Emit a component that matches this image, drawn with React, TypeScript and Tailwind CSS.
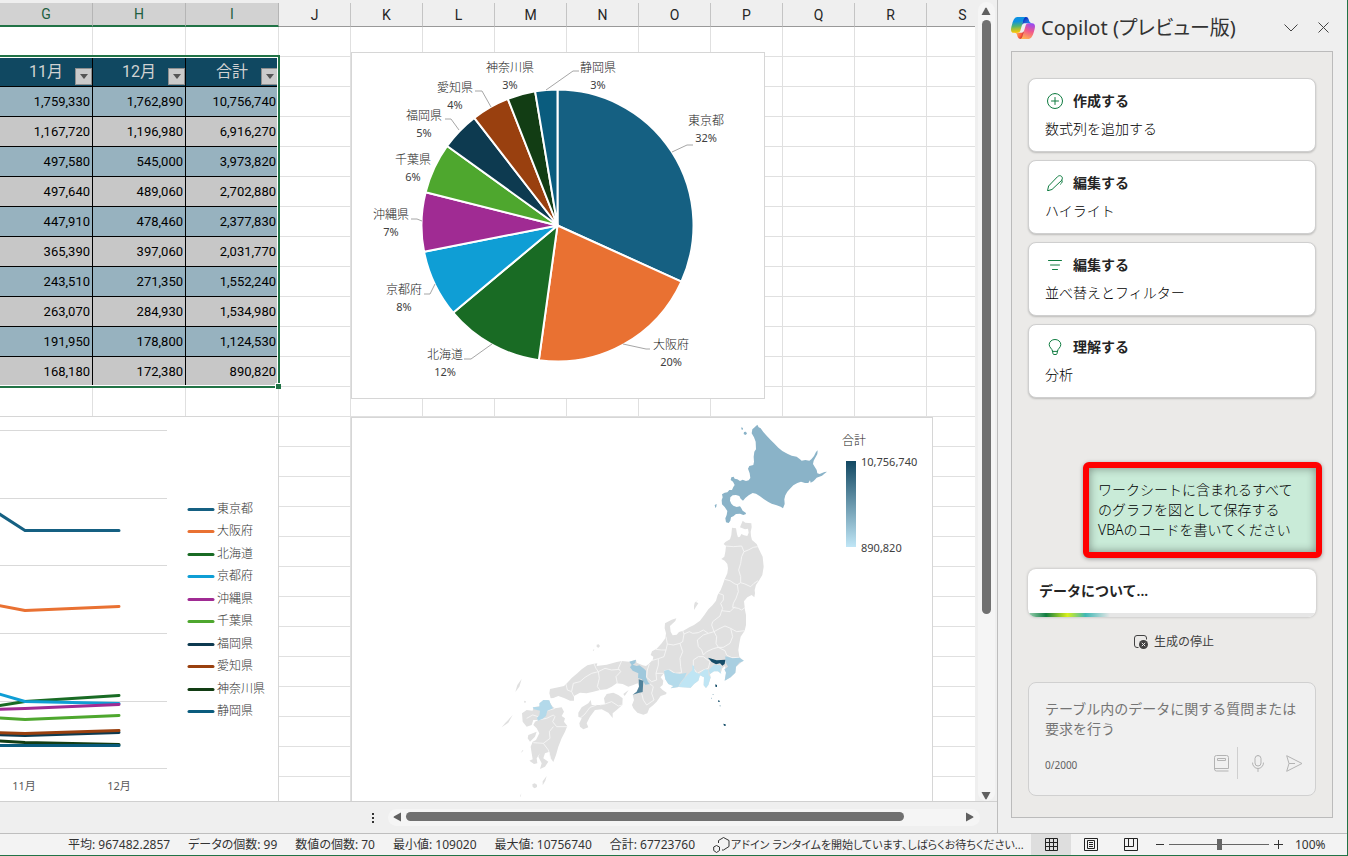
import type { ReactNode } from "react";

type Prefecture = {
  name: string;
  color: string;
  total: number;
  // 折れ線グラフの座標（10月 / 11月 / 12月）
  line: string;
  legendY: number;
  label: { x: number; y: number; percent: string };
  leader?: string;
};

const PREFECTURES: Prefecture[] = [
  {
    name: "東京都", color: "#156082", total: 10756740,
    line: "-6,93 25,113 119,113", legendY: 92,
    label: { x: 354, y: 68, percent: "32%" }, leader: "341,92 335,92 320,99",
  },
  {
    name: "大阪府", color: "#e97132", total: 6916270,
    line: "-6,187 25,193 119,189", legendY: 114,
    label: { x: 319, y: 292, percent: "20%" }, leader: "298,296 294,296 271,291",
  },
  {
    name: "北海道", color: "#196b24", total: 3973820,
    line: "-6,289 25,284 119,278", legendY: 137,
    label: { x: 93, y: 302, percent: "12%" }, leader: "112,306 119,306 140,291",
  },
  {
    name: "京都府", color: "#0f9ed5", total: 2702880,
    line: "-6,275 25,284 119,286", legendY: 159,
    label: { x: 52, y: 237, percent: "8%" }, leader: "72,241 78,241 83,231",
  },
  {
    name: "沖縄県", color: "#a02b93", total: 2377830,
    line: "-6,292 25,291 119,287", legendY: 182,
    label: { x: 39, y: 162, percent: "7%" }, leader: "59,166 65,166 70,168",
  },
  {
    name: "千葉県", color: "#4ea72e", total: 2031770,
    line: "-6,300 25,302 119,298", legendY: 204,
    label: { x: 61, y: 107, percent: "6%" },
  },
  {
    name: "福岡県", color: "#0d3a50", total: 1552240,
    line: "-6,317 25,318 119,315", legendY: 227,
    label: { x: 72, y: 63, percent: "5%" }, leader: "93,66 99,66 107,77",
  },
  {
    name: "愛知県", color: "#99400f", total: 1534980,
    line: "-6,315 25,316 119,313", legendY: 249,
    label: { x: 103, y: 35, percent: "4%" }, leader: "123,38 130,38 139,54",
  },
  {
    name: "神奈川県", color: "#123d14", total: 1124530,
    line: "-6,323 25,325 119,327", legendY: 272,
    label: { x: 158, y: 15, percent: "3%" },
  },
  {
    name: "静岡県", color: "#0a5c7e", total: 890820,
    line: "-6,328 25,328 119,328", legendY: 294,
    label: { x: 246, y: 15, percent: "3%" }, leader: "227,18 221,18 194,37",
  },
];

const ROWS = [
  ["1,759,330", "1,762,890", "10,756,740"],
  ["1,167,720", "1,196,980", "6,916,270"],
  ["497,580", "545,000", "3,973,820"],
  ["497,640", "489,060", "2,702,880"],
  ["447,910", "478,460", "2,377,830"],
  ["365,390", "397,060", "2,031,770"],
  ["243,510", "271,350", "1,552,240"],
  ["263,070", "284,930", "1,534,980"],
  ["191,950", "178,800", "1,124,530"],
  ["168,180", "172,380", "890,820"],
];

const SELECTED_COLUMNS = ["G", "H", "I"];
const OTHER_COLUMNS = ["J", "K", "L", "M", "N", "O", "P", "Q", "R", "S"];
const EMPTY_CELL = "h-[30px] border-r border-b border-[#e0e0e0] p-0";

function EmptyCells({ count }: { count: number }) {
  return (
    <>
      {Array.from({ length: count }, (_, i) => (
        <td key={i} className={EMPTY_CELL} />
      ))}
    </>
  );
}

function Grid() {
  return (
    <table className="w-[999px] table-fixed border-separate border-spacing-0 bg-white">
      <colgroup>
        {SELECTED_COLUMNS.map((c) => (
          <col key={c} className="w-[93px]" />
        ))}
        {OTHER_COLUMNS.map((c) => (
          <col key={c} className="w-[72px]" />
        ))}
      </colgroup>
      <thead>
        <tr>
          {SELECTED_COLUMNS.map((c) => (
            <th
              key={c}
              className="h-6 border-r border-b-2 border-r-[#b5b5b5] border-b-[#217346] bg-[#d2d2d2] p-0 text-sm leading-5 font-normal text-[#1e6040]"
            >
              {c}
            </th>
          ))}
          {OTHER_COLUMNS.map((c) => (
            <th
              key={c}
              className="h-6 border-r border-b border-r-[#c4c4c4] border-b-[#999] bg-[#efefef] p-0 text-sm leading-5 font-normal text-[#262626]"
            >
              {c}
            </th>
          ))}
        </tr>
      </thead>
      <tbody>
        <tr>
          <EmptyCells count={13} />
        </tr>
        <tr>
          {["11月", "12月", "合計"].map((label) => (
            <th
              key={label}
              className="relative h-[30px] border-r border-b border-black bg-[#104861] p-0 text-base leading-6 font-normal text-[#d2d2d2]"
            >
              {label}
              <button
                type="button"
                aria-label={`${label}のフィルター`}
                className="absolute right-0 bottom-px flex size-[17px] items-center justify-center border border-[#8f8f8f] bg-[#cbcbcb]"
              >
                <svg width="8" height="5" viewBox="0 0 8 5">
                  <path d="M0 0h8L4 5z" fill="#555" />
                </svg>
              </button>
            </th>
          ))}
          <EmptyCells count={10} />
        </tr>
        {ROWS.map((row, i) => (
          <tr key={row[0]}>
            {row.map((value) => (
              <td
                key={value}
                className={
                  i % 2 === 0
                    ? "h-[30px] border-r border-b border-black bg-[#97b2bf] p-0 pr-0.5 text-right text-[13px] leading-5 text-black"
                    : "h-[30px] border-r border-b border-black bg-[#c7c7c7] p-0 pr-0.5 text-right text-[13px] leading-5 text-black"
                }
              >
                {value}
              </td>
            ))}
            <EmptyCells count={10} />
          </tr>
        ))}
        {Array.from({ length: 14 }, (_, i) => (
          <tr key={i}>
            <EmptyCells count={13} />
          </tr>
        ))}
      </tbody>
    </table>
  );
}

function LineChart() {
  return (
    <svg width="278" height="384" viewBox="0 0 278 384" role="img" aria-label="月別の折れ線グラフ">
      {[13, 81, 148, 216, 284, 351].map((y) => (
        <path key={y} d={`M0 ${y + 0.5}H167`} stroke="#d9d9d9" />
      ))}
      {PREFECTURES.map((p) => (
        <g key={p.name}>
          <polyline
            points={p.line}
            transform="translate(0 .5)"
            fill="none"
            stroke={p.color}
            strokeWidth="3"
            strokeLinecap="round"
            strokeLinejoin="round"
          />
          <path d={`M189 ${p.legendY + 0.5}H213`} stroke={p.color} strokeWidth="3" strokeLinecap="round" />
          <text x="217" y={p.legendY + 4} className="fill-[#333] text-xs font-light">
            {p.name}
          </text>
        </g>
      ))}
      <text x="24" y="373" textAnchor="middle" className="fill-[#595959] text-[11px]">
        11月
      </text>
      <text x="119" y="373" textAnchor="middle" className="fill-[#595959] text-[11px]">
        12月
      </text>
    </svg>
  );
}

const PIE = { cx: 205.5, cy: 172.5, r: 136 };

function slicePath(from: number, to: number) {
  const point = (t: number) => {
    const a = t * Math.PI * 2;
    return `${PIE.cx + PIE.r * Math.sin(a)} ${PIE.cy - PIE.r * Math.cos(a)}`;
  };
  return `M${PIE.cx} ${PIE.cy}L${point(from)}A${PIE.r} ${PIE.r} 0 0 1 ${point(to)}Z`;
}

function PieChart() {
  const sum = PREFECTURES.reduce((acc, p) => acc + p.total, 0);
  let start = 0;
  const slices = PREFECTURES.map((p) => {
    const from = start;
    start += p.total / sum;
    return { p, d: slicePath(from, start) };
  });

  return (
    <svg width="412" height="345" viewBox="0 0 412 345" role="img" aria-label="都道府県別の円グラフ">
      {slices.map(({ p, d }) => (
        <path key={p.name} d={d} fill={p.color} stroke="#fff" strokeWidth="2" strokeLinejoin="round" />
      ))}
      {PREFECTURES.map((p) => (
        <g key={p.name}>
          {p.leader ? <polyline points={p.leader} fill="none" stroke="#a6a6a6" /> : null}
          <text x={p.label.x} y={p.label.y + 4} textAnchor="middle" className="fill-[#222] text-xs font-light">
            {p.name}
          </text>
          <text x={p.label.x} y={p.label.y + 21} textAnchor="middle" className="fill-[#404040] text-[11px]">
            {p.label.percent}
          </text>
        </g>
      ))}
    </svg>
  );
}

const HOKKAIDO =
  "M172 44L176 52 182 55 190 66 200 77 212 90 222 100 235 113 247 123 262 131 275 137 290 140 300 148 305 152 316 150 328 152 334 148 342 138 348 126 353 121 352 132 345 145 341 152 339 162 344 170 350 180 352 190 359 192 368 188 374 186 381 185 375 190 366 197 356 201 350 203 346 208 340 214 332 218 330 211 325 219 315 219 303 215 292 219 280 226 270 236 262 245 256 256 253 268 254 282 249 295 242 290 230 286 215 281 205 276 192 268 180 259 168 251 158 249 146 256 136 264 129 272 122 266 118 258 108 255 98 256 91 262 90 272 94 281 100 287 110 291 120 289 124 295 128 302 137 308 138 312 130 315 120 311 108 312 100 319 93 322 91 332 86 339 78 337 76 325 80 315 82 303 74 291 66 283 65 270 68 262 66 253 74 248 82 247 88 240 96 240 100 231 104 225 99 215 92 210 94 202 101 200 104 206 112 208 120 213 128 209 138 213 146 211 151 204 149 190 144 176 148 168 160 165 162 155 161 140 163 125 168 118 167 95 162 82 155 70 157 58 164 52ZM124 52l5 2-1 6-4-2ZM132 66l6-1 3 6-5 4-5-3ZM44 285l6-3-1 8-3 4Z";

const LAND = [
  // 本州
  "M758-208L766-202 784-200 785-188 782-175 783-162 786-150 800-138 808-120 818-100 821-70 817-45 808-30 798-15 794 0 795 10 793 22 785 15 772 22 762 34 765 60 768 75 768 105 764 122 752 140 748 160 745 180 748 200 760 212 738 230 736 248 722 262 704 272 708 248 705 228 697 235 692 250 684 244 672 244 660 252 662 262 655 285 648 294 641 286 642 262 630 256 625 272 612 282 602 293 566 291 542 295 550 288 535 282 526 268 522 250 512 262 520 272 518 285 510 292 518 300 530 308 528 313 512 318 500 335 490 345 478 355 472 370 460 374 442 368 430 355 426 345 432 330 428 314 440 305 447 288 443 280 430 285 415 290 398 282 380 280 365 290 350 298 330 300 310 305 290 310 270 308 252 318 252 332 240 332 222 324 205 318 190 324 182 325 178 310 180 297 205 292 222 288 232 278 245 264 262 250 275 238 292 226 312 221 322 220 320 228 350 224 380 216 395 213 418 215 428 212 438 209 440 218 458 226 468 228 476 222 484 214 488 210 490 200 482 195 486 184 500 176 515 160 526 145 528 130 524 115 525 100 532 96 545 89 559 85 556 93 540 108 542 125 548 136 560 134 567 126 580 122 598 112 612 105 630 92 643 75 655 58 668 45 678 32 683 15 692 0 698-15 704-32 712-50 714-65 712-78 704-88 694-93 703-100 706-115 708-132 701-138 706-144 720-152 724-165 726-187 738-185 741-168 744-158 750-160 754-168 762-164 772-162 776-172 774-184 765-182 750-188Z",
  // 四国
  "M265 368L275 352 295 340 302 330 305 345 330 345 345 342 342 325 350 312 370 308 385 315 398 325 397 345 380 360 368 370 368 384 355 368 335 358 315 360 300 380 290 400 295 412 280 418 270 410 268 400 275 385 265 380Z",
  // 九州
  "M130 352L150 348 160 330 175 330 188 350 195 355 215 352 222 365 215 378 225 385 222 395 232 408 225 425 215 445 205 470 198 495 190 516 182 505 178 485 165 490 160 505 175 515 165 530 150 537 155 520 145 500 150 490 140 505 142 520 132 522 118 512 128 508 125 490 122 470 128 455 138 450 148 430 140 415 130 405 135 395 145 390 130 390 125 405 110 410 98 395 96 370 110 360 128 362Z",
  // 島
  "M115 435L140 425 135 440 120 455 113 445ZM626 28L618 36 625 40 612 60 612 48 614 38ZM95 267L88 290 76 306 82 285ZM68 375L55 398 35 412 45 400ZM416 300L404 318 400 312ZM103 332l5 2-2 5-4-2ZM127 583l7-3 7 4 0 7-7 4-6-4ZM170 558L166 572 158 586 158 574ZM320 164l6-1 4 5-4 5-6-2ZM308 180l5-2-2 5ZM100 482l-8 7 6-9ZM94 610l-2 10-2-1Z",
].join("");

const BORDERS =
  "M706-132L730-130 755-132 762-115 775-120 790-128 803-130M762-115L755-100 752-80 746-60 752-40 752-22M704-32L720-28 735-18 742-16 752-22 765-18 782-10 792-20 804-28M742-16L745 5 738 25 730 40 728 52M686 10L700 15 700 30 692 40 698 55 695 62M728 52L745 55 755 60 766 52M695 62L720 65 735 50M695 62L690 78 668 95 665 105 672 125 690 115 705 108 722 115 740 125 764 122M672 125L680 140 678 160 685 172M722 115L728 140 720 160 700 172 685 172M640 195L650 185 670 176 685 172 705 182 710 195 725 203 748 202M672 125L655 130 640 135 622 150 625 170 635 180 640 195M655 130L640 120 625 128 608 130 598 125 582 132 578 122M582 132L578 155 570 160 550 165 532 162 528 140M532 162L528 180 515 180 497 178M528 180L522 200 505 206 484 212M570 160L578 185 570 205 572 230 575 248M522 242L540 240 555 250 575 248M610 210L625 200 640 200 660 215 655 235 640 240 622 250 610 235ZM505 206L505 225 498 250 500 270 485 275 470 262 472 240 478 222M498 250L520 250M478 280L490 290 485 310 492 330 470 345M455 310L460 330 470 345M395 213L385 235 392 245 378 260 382 280M325 245L345 235 365 240 388 238M325 245L328 265 322 290 330 300M325 245L305 250 285 262 270 275 250 280M228 282L232 300 245 305 252 320M250 280L245 304M312 221L318 235 325 245M330 345L345 342 365 335 385 348 397 345M270 385L285 372 300 352 320 345M142 390L170 385 190 375 195 380 188 395 200 410 232 410M190 410L178 425 180 445 160 460 130 458M160 460L175 480 182 505M172 362L195 355M110 385L128 375 145 380";

const REGIONS: [string, string][] = [
  ["#b3d9ea", "M128 352L148 350 148 340 160 330 178 331 182 343 189 355 172 362 168 378 158 386 144 392 141 384 148 376 150 362 132 358Z"],
  ["#9fc8dc", "M418 215L428 212 438 209 436 219 428 224 440 228 448 226 462 236 468 242 468 262 474 276 480 282 466 284 456 268 444 264 445 250 428 242 420 232 425 225Z"],
  ["#50829b", "M446 268L460 272 458 306 445 309 428 314 440 305 447 290Z"],
  ["#b5dbeb", "M522 242L535 239 548 248 570 252 590 248 584 262 570 280 565 291 542 295 550 288 535 282 526 268Z"],
  ["#bfe5f4", "M566 291L572 280 586 262 595 252 607 240 607 225 612 228 614 245 628 252 645 238 655 240 656 256 662 262 655 285 648 294 641 286 642 262 630 256 625 272 612 282 602 293Z"],
  ["#bce2f1", "M656 240L668 228 672 224 690 226 695 232 690 240 694 252 684 244 672 244 660 252Z"],
  ["#a9cfe1", "M706 199L728 205 748 203 762 212 748 218 738 230 736 248 722 262 704 272 708 248 703 238 714 230 706 215Z"],
  ["#154d69", "M654 203L665 206 680 211 706 209 704 222 697 227 690 220 678 223 665 216ZM676 283l5 2 0 6-5-1ZM684 331l5 1 0 4-4 0ZM700 401l7 2 0 5-5-1Z"],
  ["#8fb0bf", "M689 345l3 1-1 4-2-1ZM668 312l3 0-1 3-2 0ZM664 323l2 0 0 4-2-1Z"],
];

function MapChart() {
  return (
    <svg width="580" height="383" viewBox="0 0 580 383" role="img" aria-label="都道府県別の塗り分けマップ">
      <defs>
        <linearGradient id="mapScale" x1="0" y1="0" x2="0" y2="1">
          <stop offset="0" stopColor="#124862" />
          <stop offset="1" stopColor="#c0e6f6" />
        </linearGradient>
      </defs>
      <g transform="translate(348 -8) scale(.33333)">
        <path d={HOKKAIDO} fill="#8ab3c8" />
      </g>
      <g transform="translate(138 172) scale(.33333)">
        <path d={LAND} fill="#e0e0e0" />
        <path d={BORDERS} fill="none" stroke="#f8f8f8" strokeWidth="2.500" strokeLinejoin="round" />
        {REGIONS.map(([fill, d]) => (
          <path key={d} d={d} fill={fill} />
        ))}
      </g>
      <text x="490" y="27" className="fill-[#222] text-xs font-light">
        合計
      </text>
      <rect x="494" y="43" width="10" height="86" fill="url(#mapScale)" />
      <text x="509" y="48" className="fill-[#404040] text-[11px]">
        10,756,740
      </text>
      <text x="509" y="134" className="fill-[#404040] text-[11px]">
        890,820
      </text>
    </svg>
  );
}

function Worksheet() {
  return (
    <div className="relative min-h-0 flex-1 overflow-hidden bg-[#efefef] pt-[3px] font-[Roboto,'Noto_Sans_CJK_JP',sans-serif]">
      <Grid />
      {/* 選択範囲の枠とフィルハンドル */}
      <div className="pointer-events-none absolute top-[55px] -left-1 h-[333px] w-[284px] border-2 border-[#217346] ring-1 ring-white ring-inset">
        <span className="absolute -right-[3px] -bottom-[3px] size-1.5 border-t border-l border-white bg-[#217346]" />
      </div>
      <div className="absolute top-[416px] bottom-0 left-0 overflow-hidden border-t border-r border-[#d6d6d6] bg-white font-['Noto_Sans','Noto_Sans_CJK_JP',sans-serif]">
        <LineChart />
      </div>
      <div className="absolute top-[52px] left-[351px] border border-[#d6d6d6] bg-white font-['Noto_Sans','Noto_Sans_CJK_JP',sans-serif]">
        <PieChart />
      </div>
      <div className="absolute top-[417px] bottom-0 left-[351px] overflow-hidden border border-b-0 border-[#d6d6d6] bg-white font-['Noto_Sans','Noto_Sans_CJK_JP',sans-serif]">
        <MapChart />
      </div>
    </div>
  );
}

function VerticalScroll() {
  return (
    <div className="flex w-[22px] flex-col items-center pt-0.5">
      <div className="flex w-[17px] flex-1 flex-col items-center rounded-full bg-[#f5f5f5]">
        <button type="button" aria-label="上へスクロール" className="flex h-[18px] items-center">
          <svg width="10" height="8" viewBox="0 0 10 8">
            <path d="M.5 8L4.200 1.200q.8-1.400 1.600 0L9.500 8z" fill="#606060" />
          </svg>
        </button>
        <div className="h-[594px] w-[9px] rounded-full bg-[#707070]" />
        <button type="button" aria-label="下へスクロール" className="mt-auto flex h-[11px] items-center">
          <svg width="10" height="8" viewBox="0 0 10 8">
            <path d="M.5 0h9L5.800 6.800q-.8 1.400-1.600 0z" fill="#606060" />
          </svg>
        </button>
      </div>
    </div>
  );
}

function HorizontalScroll() {
  return (
    <div className="flex h-8 items-center border-t border-[#d0d0d0] pr-[17px]">
      <div className="ml-auto flex w-4 items-center">
        <svg width="3" height="12" viewBox="0 0 3 12" fill="#333">
          <path d="M0 1h2v2H0zM0 5h2v2H0zM0 9h2v2H0z" />
        </svg>
      </div>
      <div className="flex h-[17px] w-[592px] items-center rounded-full bg-[#f5f5f5] pb-0.5">
        <button type="button" aria-label="左へスクロール" className="flex w-[18px] justify-center">
          <svg width="8" height="10" viewBox="0 0 8 10">
            <path d="M8 .5v9L1.200 5.800q-1.400-.8 0-1.600z" fill="#606060" />
          </svg>
        </button>
        <div className="h-[9px] w-[498px] rounded-full bg-[#707070]" />
        <button type="button" aria-label="右へスクロール" className="mr-1.5 ml-auto flex">
          <svg width="8" height="10" viewBox="0 0 8 10">
            <path d="M0 .5v9l6.800-3.700q1.400-.8 0-1.600z" fill="#606060" />
          </svg>
        </button>
      </div>
    </div>
  );
}

function CopilotLogo() {
  return (
    <svg width="24" height="24" viewBox="2 2 44 44" aria-hidden="true">
      <defs>
        <radialGradient id="cpTop" cx="0" cy="0" r="1" gradientUnits="userSpaceOnUse" gradientTransform="matrix(-11 -13.4 12.6 -10.3 38 20.5)">
          <stop offset=".1" stopColor="#00aeff" />
          <stop offset=".77" stopColor="#2253ce" />
          <stop offset="1" stopColor="#0736c4" />
        </radialGradient>
        <radialGradient id="cpBottom" cx="0" cy="0" r="1" gradientUnits="userSpaceOnUse" gradientTransform="matrix(9.9 12.6 -12.2 9.5 11.1 32.8)">
          <stop stopColor="#ffb657" />
          <stop offset=".63" stopColor="#ff5f3d" />
          <stop offset=".92" stopColor="#c02b3c" />
        </radialGradient>
        <linearGradient id="cpLeft" x1="12.5" y1="7.5" x2="14.6" y2="33.9" gradientUnits="userSpaceOnUse">
          <stop offset=".16" stopColor="#0d91e1" />
          <stop offset=".49" stopColor="#52b471" />
          <stop offset=".65" stopColor="#98bd42" />
          <stop offset=".94" stopColor="#ffc800" />
        </linearGradient>
        <radialGradient id="cpRight" cx="0" cy="0" r="1" gradientUnits="userSpaceOnUse" gradientTransform="matrix(-12.7 36.2 -43.4 -15.2 41.3 12.2)">
          <stop offset=".07" stopColor="#8c48ff" />
          <stop offset=".5" stopColor="#f2598a" />
          <stop offset=".9" stopColor="#ffb152" />
        </radialGradient>
      </defs>
      <path fill="url(#cpTop)" d="M34.142 7.325A4.63 4.63 0 0 0 29.7 4h-1.35a4.63 4.63 0 0 0-4.554 3.794L21.48 20.407l.575-1.965a4.63 4.63 0 0 1 4.444-3.33h7.853l3.294 1.282 3.175-1.283h-.926a4.63 4.63 0 0 1-4.443-3.325z" />
      <path fill="url(#cpBottom)" d="M14.33 40.656A4.63 4.63 0 0 0 18.779 44h2.87a4.63 4.63 0 0 0 4.629-4.51l.312-12.163-.654 2.233a4.63 4.63 0 0 1-4.443 3.329h-7.919l-2.823-1.532-3.057 1.532h.912a4.63 4.63 0 0 1 4.447 3.344z" />
      <path fill="url(#cpLeft)" d="M29.5 4H13.46c-4.583 0-7.333 6.057-9.166 12.113-2.172 7.176-5.014 16.775 3.208 16.775h6.925a4.63 4.63 0 0 0 4.456-3.358 2078 2078 0 0 1 4.971-17.156c.843-2.843 1.544-5.284 2.621-6.805C27.079 4.716 28.086 4 29.501 4Z" />
      <path fill="url(#cpRight)" d="M18.498 44h16.04c4.582 0 7.332-6.058 9.165-12.115 2.172-7.177 5.013-16.778-3.208-16.778h-6.927a4.63 4.63 0 0 0-4.454 3.352 2082 2082 0 0 1-4.972 17.164c-.842 2.843-1.544 5.285-2.62 6.806-.604.852-1.61 1.57-3.024 1.57Z" />
    </svg>
  );
}

function StrokeIcon({ children, size = 16 }: { children: ReactNode; size?: number }) {
  return (
    <svg width={size} height={size} viewBox="0 0 16 16" fill="none" stroke="currentColor" strokeLinecap="round" strokeLinejoin="round" aria-hidden="true">
      {children}
    </svg>
  );
}

const ACTIONS = [
  {
    title: "作成する",
    text: "数式列を追加する",
    icon: <path d="M8 .5a7.5 7.5 0 1 0 0 15a7.5 7.5 0 1 0 0-15M8 4.5v7M4.500 8h7" />,
  },
  {
    title: "編集する",
    text: "ハイライト",
    icon: <path d="M.6 15.400l1-4.400L10.500 1.700c2.800-2.800 6.600.600 4 3.800L5.300 14.200zM14.800 5c1 1.600.3 2.800-1.300 4.200" />,
  },
  {
    title: "編集する",
    text: "並べ替えとフィルター",
    icon: <path d="M1.500 3.500h13M3.500 8h9M5.500 12.500h5" />,
  },
  {
    title: "理解する",
    text: "分析",
    icon: <path d="M5.500 12c-.3-2.500-3.300-3.300-3.300-6.500a5.800 5 0 0 1 11.600 0c0 3.200-3 4-3.300 6.500zM5.500 12l.5 2.700q.2.800 1 .8h2q.8 0 1-.8l.5-2.700" />,
  },
];

function CopilotPane() {
  return (
    <aside className="flex w-[350px] shrink-0 flex-col border-l border-[#bdbdbd] bg-[#efefef] pr-[14px] pb-[15px] pl-[13px] text-[#242424]">
      <header className="flex h-[51px] items-center pt-1">
        <CopilotLogo />
        <h2 className="ml-1.5 flex-1 text-xl leading-7 whitespace-nowrap text-[#333] [font-feature-settings:'palt']">
          Copilot (プレビュー版)
        </h2>
        <button type="button" aria-label="作業ウィンドウのオプション" className="mr-5 flex">
          <svg width="14" height="8" viewBox="0 0 14 8" fill="none" stroke="#444">
            <path d="M.5.500L7 7 13.500.500" />
          </svg>
        </button>
        <button type="button" aria-label="閉じる" className="mr-1 flex">
          <svg width="11" height="11" viewBox="0 0 11 11" fill="none" stroke="#444">
            <path d="M.5.500l10 10M10.500.500l-10 10" />
          </svg>
        </button>
      </header>

      <div className="flex flex-1 flex-col border border-[#bbb] bg-[#ebeae8] px-4 pt-[26px] pb-[21px]">
        <div className="flex flex-col gap-2">
          {ACTIONS.map((a) => (
            <button
              key={a.text}
              type="button"
              className="flex h-[74px] flex-col items-start justify-center gap-2 rounded-lg border border-[#cfcfcf] bg-white px-4 text-left text-sm leading-5 shadow-[0_1px_2px_rgba(0,0,0,0.2)]"
            >
              <span className="flex items-center gap-2.5 pl-0.5 font-semibold">
                <span className="text-[#107c41]">
                  <StrokeIcon>{a.icon}</StrokeIcon>
                </span>
                {a.title}
              </span>
              <span className="font-light text-black">{a.text}</span>
            </button>
          ))}
        </div>

        <div className="mt-16 -mr-1.5 ml-auto w-[239px] rounded-md border-[6px] border-[#ff0000] bg-[#c9ebd8] py-3 pr-2 pl-[9px] text-sm leading-5 font-light text-black shadow-[0_1px_4px_rgba(0,0,0,0.35),inset_0_0_10px_rgba(0,0,0,0.4)]">
          ワークシートに含まれるすべて
          <br />
          のグラフを図として保存する
          <br />
          VBAのコードを書いてください
        </div>

        <div className="mt-[11px] overflow-hidden rounded-lg bg-white shadow-[0_0_3px_rgba(0,0,0,0.25)]">
          <p className="px-[11px] py-3 text-sm leading-5 font-semibold">データについて...</p>
          <div className="h-1 bg-[#e6e6e6]">
            <div className="h-full w-[82px] bg-[linear-gradient(90deg,#9fd3b5,#107c41_22%,#d8f01c_48%,#3fb8b5_70%,#e6e6e6)]" />
          </div>
        </div>

        <button type="button" className="mx-auto mt-[15px] flex items-center gap-1.5 pl-1 text-xs leading-5 text-[#424242]">
          <svg width="14" height="14" viewBox="0 0 14 14" fill="none" aria-hidden="true">
            <path d="M4.500 12.500H3A2.500 2.500 0 0 1 .5 10V3A2.500 2.500 0 0 1 3 .5h7A2.500 2.500 0 0 1 12.500 3v1.500" stroke="#424242" />
            <circle cx="9.500" cy="9.500" r="4.500" fill="#424242" />
            <path d="M7.800 7.800l3.400 3.400M11.200 7.800l-3.400 3.400" stroke="#ebeae8" />
          </svg>
          生成の停止
        </button>

        <div className="mt-auto rounded-lg border border-[#d0d0d0] bg-[#f0f0f0] py-4 pr-3 pl-4 text-[#b3b3b3]">
          <textarea
            aria-label="Copilot への質問"
            rows={2}
            placeholder="テーブル内のデータに関する質問または要求を行う"
            className="block w-full resize-none bg-transparent text-sm leading-5 placeholder:text-[#757575] focus:outline-none"
          />
          <div className="mt-2 flex h-8 items-center">
            <span className="mr-auto pt-1 text-[10px] text-[#616161]">0/2000</span>
            <button type="button" aria-label="プロンプト ガイド" className="flex pr-2">
              <svg width="15" height="17" viewBox="0 0 15 17" fill="none" stroke="currentColor">
                <path d="M.5 14V2.500a2 2 0 0 1 2-2h10a2 2 0 0 1 2 2V13.500M.5 14a2 2 0 0 0 2 2h12M.5 13.500h14M3.500 3.500h8v2h-8z" />
              </svg>
            </button>
            <span className="h-8 w-px bg-[#cfcfcf]" />
            <button type="button" aria-label="音声入力" className="flex px-[13px]">
              <svg width="14" height="17" viewBox="0 0 14 17" fill="none" stroke="currentColor" strokeLinecap="round">
                <path d="M7 .5a3 3 0 0 0-3 3V8a3 3 0 0 0 6 0V3.500a3 3 0 0 0-3-3zM1.500 8a5.500 5.500 0 0 0 11 0M7 13.500v3" />
              </svg>
            </button>
            <button type="button" aria-label="送信" className="ml-2 flex">
              <svg width="17" height="17" viewBox="0 0 17 17" fill="none" stroke="currentColor" strokeLinejoin="round">
                <path d="M.7.700L16 8.500.7 16.300l2.300-7.800zM3 8.500h6" />
              </svg>
            </button>
          </div>
        </div>
      </div>
    </aside>
  );
}

const STATS = [
  "平均: 967482.2857",
  "データの個数: 99",
  "数値の個数: 70",
  "最小値: 109020",
  "最大値: 10756740",
  "合計: 67723760",
];

function StatusBar() {
  return (
    <footer className="flex h-[22px] shrink-0 items-center border-t border-[#bebebe] bg-[#f3f3f3] text-xs leading-4 whitespace-nowrap text-[#333]">
      <div className="ml-auto flex gap-[18px] [font-feature-settings:'palt']">
        {STATS.map((s) => (
          <span key={s}>{s}</span>
        ))}
      </div>
      <div className="ml-[18px] flex w-[318px] items-center text-[11px] [font-feature-settings:'palt']">
        <svg width="18" height="18" viewBox="0 0 18 18" fill="none" stroke="#333" aria-hidden="true">
          <path d="M5.500 7V4.500L10.500 1.500 16 4.500V10.500L10.500 14H9M3.500 9.500L6.500 11v3.500L3.500 16.500.7 14.500V11z" />
        </svg>
        アドイン ランタイムを開始しています、しばらくお待ちください...
      </div>
      <button type="button" aria-label="標準" className="flex h-full w-10 items-center justify-center bg-[#dedede]">
        <svg width="13" height="13" viewBox="0 0 13 13" fill="none" stroke="#222">
          <path d="M.5.500h12v12H.5zM4.500.500v12M8.500.500v12M.5 4.500h12M.5 8.500h12" />
        </svg>
      </button>
      <button type="button" aria-label="ページ レイアウト" className="flex h-full w-10 items-center justify-center">
        <svg width="14" height="13" viewBox="0 0 14 13" fill="none" stroke="#222">
          <path d="M.5.500h13v12H.5zM3.500 2.500h7v8h-7zM5 4.500h4M5 6.500h4M5 8.500h4" />
        </svg>
      </button>
      <button type="button" aria-label="改ページ プレビュー" className="flex h-full w-10 items-center justify-center">
        <svg width="14" height="13" viewBox="0 0 14 13" fill="none" stroke="#222">
          <path d="M.5.500h13v12H.5zM4.500.500v8M9.500.500v8h-9" />
        </svg>
      </button>
      <button type="button" aria-label="縮小" className="ml-[5px] flex">
        <svg width="8" height="9" viewBox="0 0 8 9" stroke="#333">
          <path d="M0 4.500h8" />
        </svg>
      </button>
      <input
        type="range"
        min={10}
        max={190}
        defaultValue={100}
        aria-label="ズーム"
        className="mx-[5px] h-3 w-[100px] appearance-none bg-[linear-gradient(#666,#666)] bg-[length:100%_1px] bg-center bg-no-repeat [&::-webkit-slider-thumb]:h-[11px] [&::-webkit-slider-thumb]:w-[5px] [&::-webkit-slider-thumb]:appearance-none [&::-webkit-slider-thumb]:bg-[#666]"
      />
      <button type="button" aria-label="拡大" className="flex">
        <svg width="9" height="9" viewBox="0 0 9 9" stroke="#333">
          <path d="M0 4.500h9M4.500 0v9" />
        </svg>
      </button>
      <button type="button" className="mr-[17px] ml-3 w-[35px] text-left">
        100%
      </button>
    </footer>
  );
}

export default function App() {
  return (
    <div className="flex h-screen flex-col overflow-hidden border-r border-b border-[#217346] bg-[#efefef] font-['Noto_Sans','Noto_Sans_CJK_JP',sans-serif]">
      <div className="flex min-h-0 flex-1">
        <main className="flex min-w-0 flex-1 flex-col">
          <div className="flex min-h-0 flex-1">
            <Worksheet />
            <VerticalScroll />
          </div>
          <HorizontalScroll />
        </main>
        <CopilotPane />
      </div>
      <StatusBar />
    </div>
  );
}
